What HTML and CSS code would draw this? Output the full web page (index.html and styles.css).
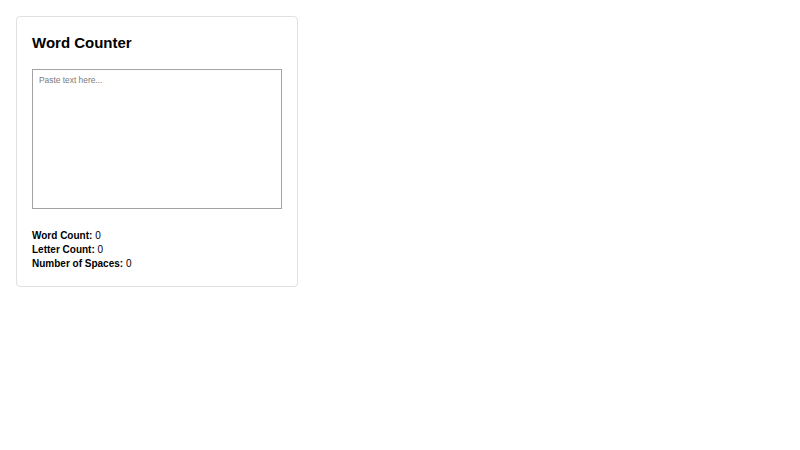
FILE: index.html
```html
<!DOCTYPE html>
<html lang="en">
<head>
<meta charset="utf-8">
<title>Word Counter</title>
<link rel="stylesheet" href="styles.css">
</head>
<body>
<div class="card">
  <h2 class="title">Word Counter</h2>
  <textarea class="input" placeholder="Paste text here..."></textarea>
  <div class="stats">
    <div class="stat"><strong>Word Count:</strong> <span>0</span></div>
    <div class="stat"><strong>Letter Count:</strong> <span>0</span></div>
    <div class="stat"><strong>Number of Spaces:</strong> <span>0</span></div>
  </div>
</div>
</body>
</html>
```

FILE: styles.css
```css
html, body {
  background: #ffffff;
}
body {
  margin: 8px;
  font-family: "Liberation Sans", Arial, sans-serif;
  font-size: 10px;
  line-height: 14px;
  color: #000;
}
.card {
  margin: 8px;
  width: 250px;
  padding: 15px;
  border: 1px solid #e0e0e0;
  border-radius: 4px;
}
.title {
  margin: 0 0 16px;
  font-size: 15px;
  line-height: 21px;
  font-weight: bold;
}
.input {
  display: block;
  box-sizing: border-box;
  width: 250px;
  height: 140px;
  margin: 0;
  padding: 5px 6px;
  font-family: "Liberation Sans", Arial, sans-serif;
  font-size: 8.4px;
  border: 1px solid #a3a3a3;
  resize: none;
}
.input::placeholder {
  color: #7a7a7a;
}
.stats {
  margin-top: 20px;
}
.stat strong {
  font-weight: bold;
}
```
